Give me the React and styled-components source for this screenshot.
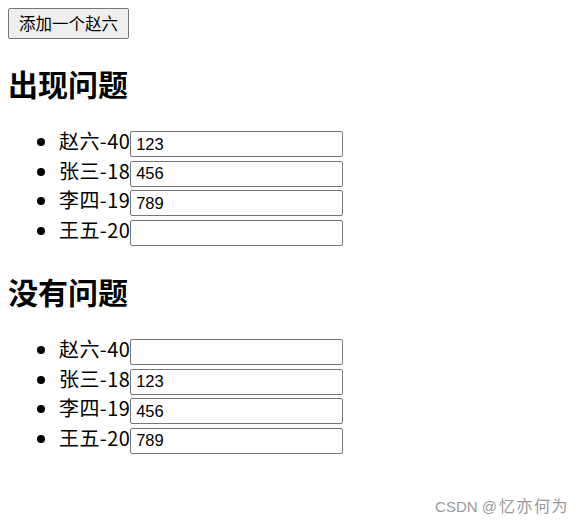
import React, { useState } from 'react';
import styled, { createGlobalStyle } from 'styled-components';

// page defaults, fonts named because there is no network
const GlobalStyle = createGlobalStyle`
  html, body {
    margin: 0;
    background: #fff;
  }
  body {
    margin: 8px;
    font-family: "Noto Sans CJK SC", "Liberation Sans", sans-serif;
    color: #000;
  }
`;

const Page = styled.div`
  position: relative;
  min-height: 512px;
`;

const AddButton = styled.button`
  display: block;
  width: 121px;
  height: 31px;
  padding: 0 8px;
  background: #efefef;
  border: 1px solid #767676;
  border-radius: 2px;
  font-family: "Noto Sans CJK SC", sans-serif;
  font-size: 16.5px;
  line-height: 1;
  color: #000;
`;

const Title = styled.h2`
  margin: 24px 0 25px;
  font-size: 30px;
  line-height: 41px;
  font-weight: 700;
`;

const List = styled.ul`
  margin: 0;
  padding-left: 51px;
  list-style: disc;
`;

// line-height under the row height keeps the text a bit above the input's middle
const Item = styled.li`
  height: 29.5px;
  font-size: 20px;
  line-height: 24px;
  letter-spacing: 0.4px;
  white-space: nowrap;
`;

const Field = styled.input`
  box-sizing: border-box;
  width: 213px;
  height: 26px;
  margin: 2px 0 0;
  padding: 0 5px;
  vertical-align: top;
  border: 1px solid #767676;
  border-radius: 2px;
  font-family: "Liberation Sans", Arial, sans-serif;
  font-size: 16.5px;
  letter-spacing: 0;
  color: #000;
`;

// watermark that sits over the page corner
const Watermark = styled.div`
  position: absolute;
  right: 7px;
  bottom: 3px;
  font-size: 15px;
  color: #9a9a9a;
  white-space: nowrap;
`;

const Brand = styled.span`
  font-family: "Liberation Sans Narrow", "Liberation Sans", sans-serif;
  margin-right: 2px;
`;

const Author = styled.span`
  font-family: "Noto Sans CJK SC", sans-serif;
  font-size: 16px;
  letter-spacing: ${({ spread }) => spread}px;
`;

const Person = ({ person, keep }) => {
  const [text, setText] = useState(keep);
  return (
    <Item>
      {person.name}-{person.age}
      <Field value={text} onChange={e => setText(e.target.value)} />
    </Item>
  );
};

export default function App() {
  const [people, setPeople] = useState([
    { id: 1, name: '赵六', age: 40 },
    { id: 2, name: '张三', age: 18 },
    { id: 3, name: '李四', age: 19 },
    { id: 4, name: '王五', age: 20 },
  ]);
  const first = ['123', '456', '789', ''];
  const second = ['', '123', '456', '789'];

  return (
    <Page>
      <GlobalStyle />
      <AddButton onClick={() => setPeople([...people])}>添加一个赵六</AddButton>
      <Title>出现问题</Title>
      <List>
        {people.map((p, index) => (
          <Person key={'a' + index} person={p} keep={first[index]} />
        ))}
      </List>
      <Title>没有问题</Title>
      <List>
        {people.map((p, index) => (
          <Person key={p.id} person={p} keep={second[index]} />
        ))}
      </List>
      <Watermark>
        <Brand>CSDN @</Brand>
        <Author spread={1.5}>忆亦何为</Author>
      </Watermark>
    </Page>
  );
}
